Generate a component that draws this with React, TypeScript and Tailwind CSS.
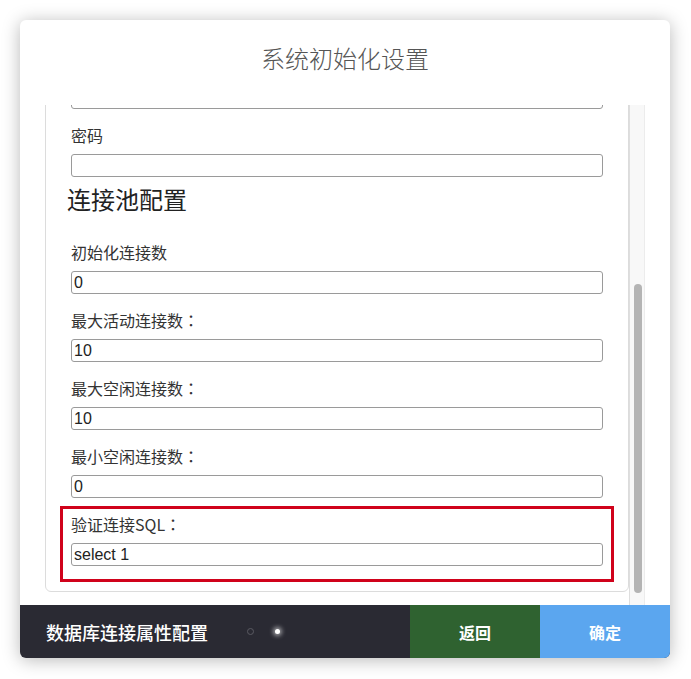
import React from "react";

const cjk = { fontFamily: '"Noto Sans CJK SC", "Noto Sans", sans-serif' };
const colonFont = { fontFamily: '"Noto Sans CJK TC", "Noto Sans CJK SC", sans-serif' };
const inputFont = { fontFamily: '"Liberation Sans", "Noto Sans CJK SC", sans-serif' };

function Field({
  label,
  value,
  colon,
  last,
}: {
  label: string;
  value: string;
  colon?: boolean;
  last?: boolean;
}) {
  return (
    <div className={last ? "" : "mb-[16px]"}>
      <div className="h-[20px] leading-[20px] text-[16px] text-[#333]" style={cjk}>
        {label}
        {colon ? <span style={colonFont}>：</span> : null}
      </div>
      <div
        className="mt-[9px] h-[23px] border border-[#9a9a9a] rounded-[3px] bg-white pl-[2px] text-[16px] leading-[21px] text-[#222]"
        style={inputFont}
      >
        {value}
      </div>
    </div>
  );
}

export default function App() {
  return (
    <div className="w-[691px] h-[679px] bg-white pt-[20px] pl-[20px]">
      <div className="w-[650px] h-[638px] bg-white rounded-[6px] overflow-hidden flex flex-col shadow-[0_2px_18px_rgba(0,0,0,0.28)]">
        {/* Header */}
        <div className="h-[85px] shrink-0 pt-[22px] text-center">
          <div
            className="text-[24px] leading-[32px] text-[#555] font-light"
            style={cjk}
          >
            系统初始化设置
          </div>
        </div>

        {/* Scroll area */}
        <div className="h-[500px] shrink-0 flex pl-[25px] pr-[25px]">
          <div className="flex-1 min-w-0 overflow-hidden flex flex-col justify-end pb-[13px]">
            <div className="border border-[#dcdcdc] rounded-[6px] px-[25px] pt-[20px] pb-[9px]">
              <div className="h-[23px] border border-[#9a9a9a] rounded-[3px] bg-white mb-[16px]" />
              <Field label="密码" value="" last />
              <div
                className="mt-[7px] mb-[28px] text-[24px] leading-[30px] text-[#222] -ml-[4px]"
                style={cjk}
              >
                连接池配置
              </div>
              <Field label="初始化连接数" value="0" />
              <Field label="最大活动连接数" colon value="10" />
              <Field label="最大空闲连接数" colon value="10" />
              <Field label="最小空闲连接数" colon value="0" last />
              <div className="mt-[8px] -mx-[11px] border-[3px] border-[#d0021b] px-[8px] pt-[5px] pb-[13px]">
                <Field label="验证连接SQL" colon value="select 1" last />
              </div>
            </div>
          </div>
          {/* Scrollbar */}
          <div className="w-[16px] shrink-0 bg-[#f8f8f8] border-l border-l-[#dedede] border-r border-r-[#ececec] flex flex-col">
            <div className="mt-[179px] ml-[4px] w-[8px] h-[309px] rounded-full bg-[#b4b4b4]" />
          </div>
        </div>

        {/* Footer */}
        <div className="h-[53px] shrink-0 flex bg-[#2a2a33]">
          <div className="flex-1 flex items-center pl-[26px]">
            <div className="text-[18px] leading-[24px] text-white font-medium" style={cjk}>
              数据库连接属性配置
            </div>
            <div className="ml-[39px] w-[7px] h-[7px] rounded-full border border-[#5a5a62]" />
            <div className="ml-[21px] w-[5px] h-[5px] rounded-full bg-white shadow-[0_0_4px_2px_rgba(255,255,255,0.55)]" />
          </div>
          <div
            className="w-[130px] flex items-center justify-center bg-[#2f6230] text-white text-[16px] font-bold"
            style={cjk}
          >
            返回
          </div>
          <div
            className="w-[130px] flex items-center justify-center bg-[#5ba6ef] text-white text-[16px] font-bold"
            style={cjk}
          >
            确定
          </div>
        </div>
      </div>
    </div>
  );
}
